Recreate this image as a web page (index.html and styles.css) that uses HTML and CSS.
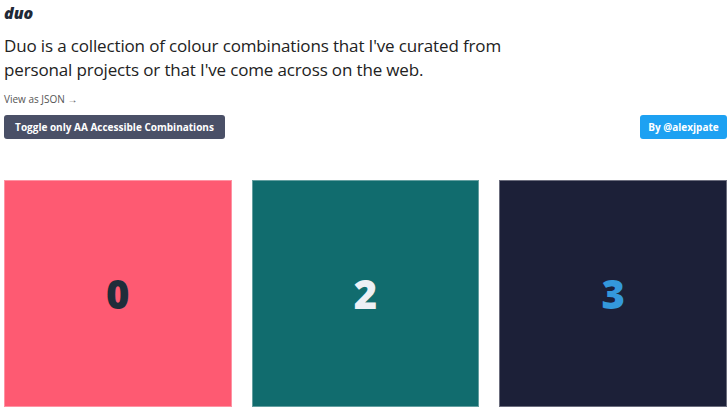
FILE: index.html
```html
<!DOCTYPE html>
<html lang="en">

<head>
    <meta charset="UTF-8">
    <meta name="viewport" content="width=device-width, initial-scale=1.0">
    <title>duo</title>
    <link rel="stylesheet" href="styles.css">
</head>

<body>
    <header class="intro">
        <h1 class="logo">duo</h1>
        <p class="lead">Duo is a collection of colour combinations that I've curated from personal projects or that I've come across on the web.</p>
        <a class="json-link" href="#">View as JSON &rarr;</a>
        <div class="actions">
            <button class="btn btn-toggle">Toggle only AA Accessible Combinations</button>
            <a class="btn btn-author" href="#">By @alexjpate</a>
        </div>
    </header>

    <main class="grid">
        <div class="swatch swatch-pink"><span>0</span></div>
        <div class="swatch swatch-teal"><span>2</span></div>
        <div class="swatch swatch-navy"><span>3</span></div>
    </main>
</body>

</html>
```

FILE: styles.css
```css
body {
    font-family: "Open Sans", "Noto Sans", sans-serif;
    color: #1f2937;
    background-color: #fff;
    margin: 0;
    padding: 0 1px 0 4px;
}

.logo {
    font-size: 16px;
    font-style: italic;
    font-weight: 800;
    margin: 0;
    padding-top: 3px;
    line-height: 20px;
}

.lead {
    font-size: 17px;
    letter-spacing: -0.15px;
    line-height: 24px;
    width: 500px;
    margin: 11px 0 9px 0;
    color: #222;
}

.json-link {
    display: block;
    font-size: 10px;
    color: #555;
    text-decoration: none;
    line-height: 16px;
}

.actions {
    display: flex;
    justify-content: space-between;
    margin-top: 8px;
}

.btn {
    font-family: "Open Sans", sans-serif;
    font-size: 10px;
    font-weight: 700;
    color: white;
    border: none;
    border-radius: 3px;
    height: 24px;
    padding: 0 8px;
    display: flex;
    align-items: center;
    white-space: nowrap;
    text-decoration: none;
    cursor: pointer;
}

.btn-toggle {
    background-color: #4a5067;
    width: 221px;
    justify-content: center;
}

.btn-author {
    background-color: #1da1f2;
    width: 87px;
    box-sizing: border-box;
    justify-content: center;
}

.grid {
    display: grid;
    grid-template-columns: repeat(3, 1fr);
    gap: 20px;
    margin-top: 41px;
}

.swatch {
    height: 227px;
    display: flex;
    align-items: center;
    justify-content: center;
    font-family: "Open Sans", sans-serif;
    font-weight: 800;
    font-size: 40px;
    box-sizing: border-box;
    border: 1px solid rgba(255, 255, 255, 0.35);
}

.swatch-pink {
    background-color: #fe5a72;
    color: #1f2d3a;
}

.swatch-teal {
    background-color: #116c6e;
    color: #eef0f5;
}

.swatch-navy {
    background-color: #1c2038;
    color: #3498db;
}
```
